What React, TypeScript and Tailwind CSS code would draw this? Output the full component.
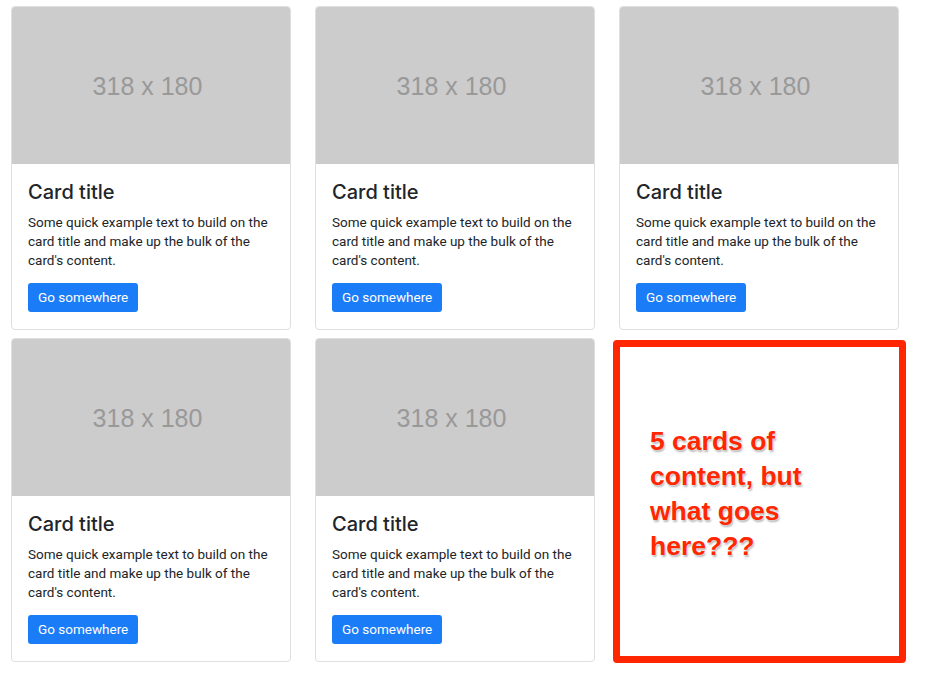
const cards = [1, 2, 3, 4, 5];

function Card() {
  return (
    <div className="flex flex-col overflow-hidden rounded-[4px] border border-[#dfdfdf] bg-white">
      <div className="flex h-[157px] items-center justify-center bg-[#cccccc] pt-[3px] pr-[7px]">
        <span className="font-['Liberation_Sans',Arial,sans-serif] text-[25px] text-[#999999]">
          318 x 180
        </span>
      </div>
      <div className="px-4 pt-[16px] pb-[17px]">
        <h5 className="mb-[9px] font-['Inter',sans-serif] text-[20px] leading-[24px] font-medium text-[#212529]">
          Card title
        </h5>
        <p className="mb-[13px] text-[13.5px] leading-[19px] text-[#212529]">
          Some quick example text to build on the card title and make up the bulk of the card's content.
        </p>
        <a className="inline-block h-[29px] rounded-[3px] bg-[#1a7cf7] px-[10px] text-[13.5px] leading-[29px] text-white">
          Go somewhere
        </a>
      </div>
    </div>
  );
}

export default function App() {
  return (
    <div className="min-h-screen bg-white px-[11px] pt-[6px] font-['Roboto',sans-serif]">
      <div className="grid w-[888px] grid-cols-[280px_280px_280px] gap-x-[24px] gap-y-[8px]">
        {cards.map((c) => (
          <Card key={c} />
        ))}
        {/* annotation over the empty slot */}
        <div className="-mr-[7px] -mb-[1px] -ml-[6px] mt-[2px] rounded-[4px] border-[7px] border-[#ff2600] bg-white pt-[77px] pl-[30px]">
          <p className="font-['Liberation_Sans',Arial,sans-serif] text-[26.5px] leading-[35px] font-bold text-[#ff2600] [text-shadow:0_0_2px_#fff,1px_2px_2px_rgba(0,0,0,0.3)]">
            5 cards of
            <br />
            content, but
            <br />
            what goes
            <br />
            here???
          </p>
        </div>
      </div>
    </div>
  );
}
